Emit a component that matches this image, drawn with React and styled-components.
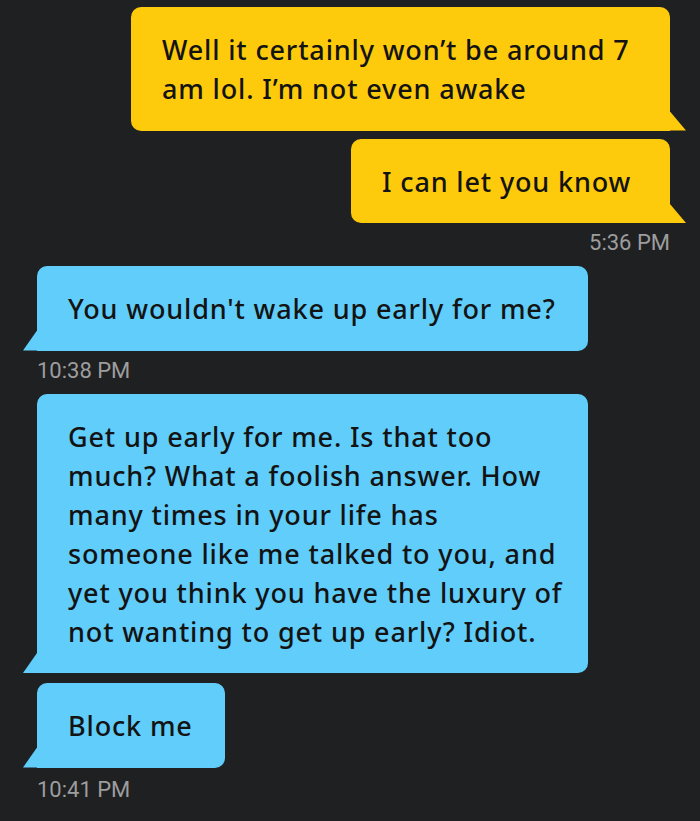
import React from 'react';
import styled, { createGlobalStyle, css } from 'styled-components';

const GlobalStyle = createGlobalStyle`
  html, body {
    margin: 0;
    padding: 0;
    background: #1f2022;
  }
  body {
    font-family: "Noto Sans", Roboto, sans-serif;
  }
`;

const Thread = styled.div`
  width: 700px;
  min-height: 821px;
  box-sizing: border-box;
  padding: 7px 30px 0 37px;
  display: flex;
  flex-direction: column;
  background: #1f2022;
`;

const Group = styled.div`
  display: flex;
  flex-direction: column;
  align-items: ${props => (props.$mine ? 'flex-end' : 'flex-start')};
  gap: ${props => props.$gap || 8}px;
  margin-bottom: 11px;
`;

const Bubble = styled.div`
  position: relative;
  box-sizing: border-box;
  width: ${props => props.$width}px;
  padding: 23px 10px 22.5px 31px;
  font-size: 27px;
  font-weight: 500;
  letter-spacing: 0.85px;
  line-height: 39px;
  color: #131313;
  white-space: nowrap;
  background: ${props => (props.$mine ? '#fdca0c' : '#60cdfa')};
  border-radius: 10px;

  ${props => props.$tail && (props.$mine ? css`
    border-bottom-right-radius: 0;

    &::after {
      content: '';
      position: absolute;
      right: -16px;
      bottom: 0;
      width: 16px;
      height: 19px;
      background: #fdca0c;
      clip-path: polygon(0 0, 100% 100%, 0 100%);
    }
  ` : css`
    border-bottom-left-radius: 0;

    &::after {
      content: '';
      position: absolute;
      left: -14px;
      bottom: 0;
      width: 14px;
      height: 20px;
      background: #60cdfa;
      clip-path: polygon(100% 0, 100% 100%, 0 100%);
    }
  `)}
`;

const Stamp = styled.div`
  font-family: Roboto, sans-serif;
  font-size: 22px;
  line-height: 24px;
  color: #9d9d9d;
`;

const Message = ({ mine, tail, width, lines }) => (
  <Bubble $mine={mine} $tail={tail} $width={width}>
    {lines.map((line, i) => (
      <React.Fragment key={i}>
        {i > 0 && <br />}
        {line}
      </React.Fragment>
    ))}
  </Bubble>
);

const App = () => (
  <>
    <GlobalStyle />
    <Thread>
      <Group $mine>
        <Message
          mine
          tail
          width={539}
          lines={['Well it certainly won’t be around 7', 'am lol. I’m not even awake']}
        />
        <Message mine tail width={319} lines={['I can let you know']} />
        <Stamp>5:36 PM</Stamp>
      </Group>

      <Group>
        <Message tail width={551} lines={["You wouldn't wake up early for me?"]} />
        <Stamp>10:38 PM</Stamp>
      </Group>

      <Group $gap={10}>
        <Message
          tail
          width={551}
          lines={[
            'Get up early for me. Is that too',
            'much? What a foolish answer. How',
            'many times in your life has',
            'someone like me talked to you, and',
            'yet you think you have the luxury of',
            'not wanting to get up early? Idiot.',
          ]}
        />
        <Message tail width={188} lines={['Block me']} />
        <Stamp>10:41 PM</Stamp>
      </Group>
    </Thread>
  </>
);

export default App;
